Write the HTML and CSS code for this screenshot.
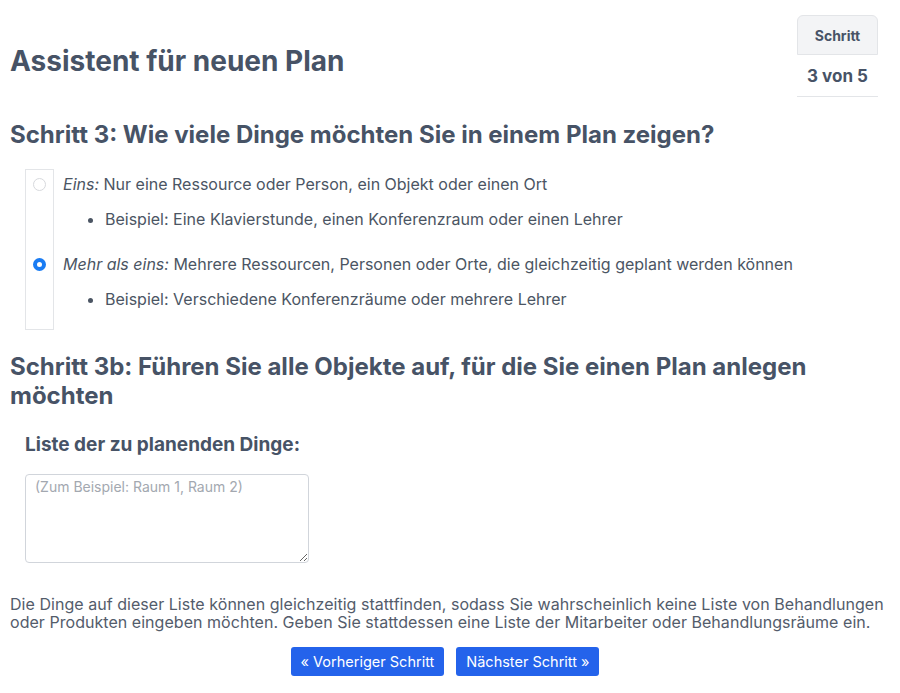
FILE: index.html
```html
<!DOCTYPE html>
<html lang="de">
<head>
<meta charset="utf-8">
<title>Assistent für neuen Plan</title>
<link rel="stylesheet" href="styles.css">
</head>
<body>
<div class="page">
  <header class="top">
    <h1 class="title">Assistent für neuen Plan</h1>
    <table class="steps">
      <thead><tr><th>Schritt</th></tr></thead>
      <tbody><tr><td>3 von 5</td></tr></tbody>
    </table>
  </header>

  <h2 class="step-head">Schritt 3: Wie viele Dinge möchten Sie in einem Plan zeigen?</h2>

  <div class="choices">
    <div class="choice-rail"></div>
    <div class="radio-cell r1"><input type="radio" name="count" class="radio"></div>
    <div class="option o1">
      <div class="opt-line"><em>Eins:</em> Nur eine Ressource oder Person, ein Objekt oder einen Ort</div>
      <ul class="examples"><li>Beispiel: Eine Klavierstunde, einen Konferenzraum oder einen Lehrer</li></ul>
    </div>
    <div class="radio-cell r2"><input type="radio" name="count" class="radio" checked></div>
    <div class="option o2">
      <div class="opt-line"><em>Mehr als eins:</em> Mehrere Ressourcen, Personen oder Orte, die gleichzeitig geplant werden können</div>
      <ul class="examples"><li>Beispiel: Verschiedene Konferenzräume oder mehrere Lehrer</li></ul>
    </div>
  </div>

  <h2 class="step-head step-b">Schritt 3b: Führen Sie alle Objekte auf, für die Sie einen Plan anlegen möchten</h2>

  <div class="list-block">
    <h3 class="list-label">Liste der zu planenden Dinge:</h3>
    <textarea class="list-input" placeholder="(Zum Beispiel: Raum 1, Raum 2)"></textarea>
  </div>

  <p class="note">Die Dinge auf dieser Liste können gleichzeitig stattfinden, sodass Sie wahrscheinlich keine Liste von Behandlungen oder Produkten eingeben möchten. Geben Sie stattdessen eine Liste der Mitarbeiter oder Behandlungsräume ein.</p>

  <div class="actions">
    <button class="btn" type="button">« Vorheriger Schritt</button>
    <button class="btn" type="button">Nächster Schritt »</button>
  </div>
</div>
</body>
</html>
```

FILE: styles.css
```css
* { box-sizing: border-box; }
html, body { margin: 0; padding: 0; background: #fff; }
body {
  font-family: Inter, "Noto Sans", "Liberation Sans", sans-serif;
  color: #4b5563;
  font-size: 16px;
}
.page { padding: 15px 10px 0 10px; }

.top {
  display: flex;
  justify-content: space-between;
  align-items: flex-start;
}
.title {
  margin: 29px 0 0 0;
  font-size: 28px;
  line-height: 34px;
  font-weight: 700;
  color: #475366;
}
.steps {
  border-collapse: separate;
  border-spacing: 0;
  width: 81px;
  margin-right: 12px;
}
.steps th {
  height: 40px;
  background: #f3f4f6;
  border: 1px solid #e3e5e8;
  border-radius: 6px 6px 0 0;
  font-size: 14px;
  font-weight: 700;
  color: #475366;
  text-align: center;
  padding: 0;
}
.steps td {
  height: 42px;
  text-align: center;
  font-size: 17px;
  font-weight: 700;
  color: #475366;
  border-bottom: 1px solid #e3e5e8;
  padding: 0;
}

.step-head {
  margin: 23px 0 0 0;
  font-size: 24px;
  line-height: 30px;
  font-weight: 700;
  color: #475366;
}
.step-b { margin-top: 22px; line-height: 29px; padding-right: 40px; }

.choices {
  display: grid;
  grid-template-columns: 29px 1fr;
  column-gap: 9px;
  margin: 19px 0 0 15px;
}
.choice-rail {
  grid-column: 1;
  grid-row: 1 / 3;
  border: 1px solid #e3e5e8;
}
.radio-cell {
  grid-column: 1;
  display: flex;
  justify-content: center;
  padding-top: 9px;
}
.r1 { grid-row: 1; }
.r2 { grid-row: 2; padding-top: 27px; }
.option { grid-column: 2; }
.o1 { grid-row: 1; padding-top: 3px; }
.o2 { grid-row: 2; padding-top: 21px; padding-bottom: 19px; }

.radio {
  appearance: none;
  -webkit-appearance: none;
  margin: 0;
  width: 13px;
  height: 13px;
  border-radius: 50%;
  border: 1px solid #d7d9dd;
  background: #fff;
}
.radio:checked {
  border: 4px solid #1a7cf3;
  background: #fff;
}

.opt-line { line-height: 24px; font-size: 16px; color: #4b5563; }
.opt-line em { font-style: italic; }
.examples {
  margin: 11px 0 0 0;
  padding-left: 42px;
  line-height: 24px;
}

.list-block { margin: 0 0 0 15px; }
.list-label {
  margin: 22px 0 0 0;
  font-size: 19px;
  line-height: 26px;
  font-weight: 700;
  color: #475366;
}
.list-input {
  display: block;
  margin-top: 16px;
  width: 284px;
  height: 89px;
  border: 1px solid #d1d5db;
  border-radius: 4px;
  padding: 2px 9px;
  font-family: inherit;
  font-size: 14px;
  line-height: 20px;
  color: #4b5563;
  resize: vertical;
}
.list-input::placeholder { color: #a3a8b0; }

.note {
  margin: 32px 0 0 0;
  font-size: 16px;
  line-height: 18px;
  letter-spacing: 0.04px;
  color: #535c6b;
}

.actions {
  display: flex;
  justify-content: center;
  gap: 12px;
  margin-top: 16px;
  padding-right: 10px;
}
.btn {
  height: 29px;
  padding: 0 10px;
  border: none;
  border-radius: 3px;
  background: #2463eb;
  color: #fff;
  font-family: inherit;
  font-size: 14.5px;
}
```
